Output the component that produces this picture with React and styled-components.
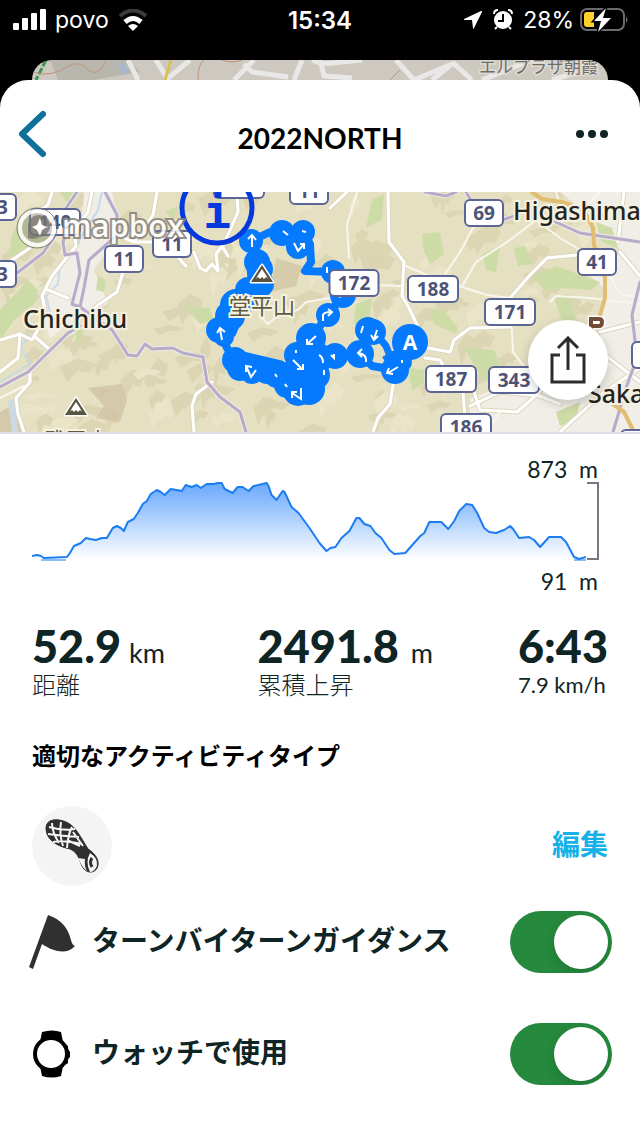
import styled, { createGlobalStyle } from "styled-components";

const elevation = [
  [0, 74], [5, 73], [9, 74], [12, 76], [35, 75], [38, 71], [42, 64], [49, 61], [54, 56], [58, 57],
  [64, 58], [70, 56], [75, 56], [81, 46], [85, 44], [89, 46], [92, 49], [96, 40], [102, 37],
  [106, 31], [111, 22], [115, 19], [119, 12], [125, 8], [129, 10], [133, 13], [139, 7], [145, 8],
  [150, 9], [154, 3], [160, 5], [165, 3], [169, 6], [175, 2], [182, 2], [186, 1], [190, 1],
  [193, 7], [201, 11], [206, 5], [211, 5], [217, 9], [222, 4], [235, 1], [237, 4], [240, 13],
  [245, 18], [251, 9], [253, 10], [260, 25], [267, 31], [278, 46], [288, 61], [295, 69],
  [299, 66], [304, 65], [310, 56], [318, 49], [325, 36], [328, 36], [333, 42], [339, 44],
  [344, 51], [350, 56], [358, 68], [363, 72], [374, 71], [381, 63], [389, 54], [393, 51],
  [398, 40], [405, 40], [410, 40], [417, 47], [423, 39], [428, 29], [435, 22], [441, 23],
  [446, 31], [453, 46], [458, 50], [465, 51], [470, 49], [473, 48], [479, 44], [482, 47],
  [488, 56], [498, 55], [503, 58], [509, 65], [518, 55], [530, 55], [535, 60], [543, 75],
  [548, 77], [555, 75],
];

const shields = [
  { x: 55, y: 30, w: 50, label: "140" },
  { x: 172, y: 52, w: 38, label: "11" },
  { x: 124, y: 67, w: 38, label: "11" },
  { x: -3, y: 15, w: 38, label: "13" },
  { x: -3, y: 82, w: 38, label: "13" },
  { x: 239, y: -7, w: 50, label: "274" },
  { x: 309, y: -1, w: 38, label: "11" },
  { x: 484, y: 21, w: 38, label: "69" },
  { x: 597, y: 70, w: 38, label: "41" },
  { x: 433, y: 97, w: 50, label: "188" },
  { x: 510, y: 120, w: 50, label: "171" },
  { x: 451, y: 187, w: 50, label: "187" },
  { x: 514, y: 188, w: 50, label: "343" },
  { x: 466, y: 235, w: 50, label: "186" },
  { x: 651, y: 163, w: 38, label: "74" },
  { x: 640, y: 251, w: 38, label: "15" },
];

const greens = [
  "M20 28L40 20L52 40L30 60L8 66L12 44Z",
  "M0 118L28 88L38 98L34 112L14 128L0 150Z",
  "M98 84L106 88L104 100L96 98Z",
  "M76 136L84 138L80 150L76 148Z",
  "M184 114L210 116L214 128L200 132Z",
  "M60 0L74 0L68 12Z",
  "M165 20L178 14L174 26Z",
  "M372 8L384 2L382 28L366 36Z",
  "M422 42L440 40L444 62L430 72L424 60Z",
  "M482 62L500 54L496 80L486 78Z",
  "M514 56L526 54L532 72L518 74Z",
  "M532 84L556 74L600 90L592 98L560 96L544 98Z",
  "M430 116L444 118L458 136L456 142L434 132Z",
  "M464 156L494 158L500 172L486 190L476 176Z",
  "M554 106L568 102L576 128L562 130Z",
  "M356 112L372 106L368 134L354 132Z",
  "M408 176L424 178L424 192L412 198Z",
  "M596 30L612 36L618 56L602 50Z",
  "M556 220L580 210L576 228L560 234Z",
];

const urban = [
  "M84 0L112 0L120 40L94 78L108 112L84 122L50 146L44 130L40 104L66 70L80 52Z",
  "M560 0L640 0L640 240L470 240L470 206L500 196L530 206L560 150L600 150L604 96L590 84L622 60L590 24Z",
];

const whiteRoads = [
  "M52 0L48 13L36 22M30 56L0 76",
  "M92 0L88 20L74 38L76 54L52 84L42 104L45 118",
  "M0 180L18 166L20 142L0 148",
  "M20 142L32 148L40 134M34 144L48 156",
  "M30 178L30 190L16 206L18 222L24 240",
  "M123 80L117 100L98 113L88 122",
  "M48 98L68 106",
  "M157 0L153 23L134 50L164 50L186 74M134 50L120 44",
  "M194 60L200 76L206 79L212 72L218 79L216 62L222 54L228 64",
  "M237 0L238 20L222 56",
  "M212 190L196 202L192 214L194 240",
  "M388 0L389 50L404 70L402 104L408 114L417 133",
  "M330 16L347 0",
  "M393 193L390 212L378 226L373 240",
  "M428 156L450 160L454 148L470 136L510 135",
  "M425 166L440 168L450 186L463 200L466 240",
  "M510 106L530 83L547 66L577 63",
  "M474 200L480 218L517 220L533 206L560 180",
  "M560 240L604 200L640 176",
  "M600 140L640 130M596 156L640 190",
  "M620 60L640 84M618 50L624 0",
  "M470 214L500 200L540 204L560 212",
];

const thinRoads = [
  "M357 0L347 33L349 66",
  "M403 73L420 80L440 90L460 60L473 36L500 20",
  "M440 88L487 103L510 106L513 160L527 178",
  "M463 93L476 70L510 48L536 28",
  "M260 124L268 132L280 122L298 118L306 110L330 106",
  "M375 93L402 94",
  "M550 110L556 104L590 106L640 112",
  "M536 28L560 46L580 58",
  "M556 0L566 30L590 10L600 0",
  "M610 84L620 102L640 106M590 160L612 174",
  "M0 206L24 194M486 240L500 220",
];

const purpleRoads = [
  "M77 0L62 22L68 36L63 50L65 63L77 61L80 81L72 112L80 115",
  "M105 0L117 23L117 43L89 68L84 96L80 115L112 138L128 163L137 164L145 152L152 157L173 156L183 161L203 165L207 190L220 205L240 220L246 240",
  "M0 195L28 180L68 141L80 134",
  "M17 81L43 61L56 42",
  "M425 0L446 4L456 0M466 0L472 10",
  "M496 30L517 23",
  "M538 22L580 41L640 50",
  "M640 90L632 123L637 166L627 193L613 240",
];

const routeDots = [
  [251, 49, 12], [282, 41, 13], [303, 40, 12], [298, 55, 12], [333, 80, 12], [343, 103, 13],
  [328, 123, 12], [311, 146, 15], [297, 163, 13], [257, 70, 13], [260, 77, 13], [261, 92, 13],
  [248, 98, 13], [236, 113, 16], [230, 124, 15], [219, 138, 13], [224, 145, 10], [235, 168, 13],
  [240, 176, 13], [252, 180, 12], [267, 179, 13], [277, 183, 13], [287, 193, 13], [298, 199, 15],
  [309, 197, 16], [315, 183, 15], [300, 174, 15], [318, 166, 15], [335, 164, 13], [360, 162, 14],
  [368, 138, 13], [373, 140, 13], [395, 178, 14], [402, 170, 10],
];

// small, fixed pseudo random sequence so the hill shading never changes
const hills = (() => {
  let seed = 41;
  const next = () => {
    seed = (seed * 16807) % 2147483647;
    return seed / 2147483647;
  };
  return Array.from({ length: 210 }, () => {
    const x = next() * 580;
    const y = next() * 240;
    const w = 10 + next() * 28;
    const h = 6 + next() * 18;
    return {
      d: `M${x} ${y}l${w * 0.5} ${-h * 0.5}l${w * 0.5} ${h * 0.3}l${-w * 0.2} ${h * 0.5}l${-w * 0.3} ${-h * 0.1}l${-w * 0.3} ${h * 0.6}Z`,
      fill: next() > 0.4 ? "#cfc49c" : "#f3eed6",
    };
  });
})();

function Shield({ x, y, w, label }) {
  return (
    <g>
      <rect x={x - w / 2} y={y - 13} width={w} height="26" rx="5" fill="#fff" stroke="#5b6596" strokeWidth="2" />
      <text x={x} y={y + 7} textAnchor="middle" fontSize="19" fontWeight="700" fill="#4c5377">
        {label}
      </text>
    </g>
  );
}

function Peak({ x, y }) {
  return (
    <g transform={`translate(${x} ${y})`}>
      <path d="M0 -9L11 8H-11Z" fill="#57533f" stroke="#fff" strokeWidth="3" paintOrder="stroke" strokeLinejoin="round" />
      <path d="M0 -5L4 1L6 5L4 3L2 5L0 3L-2 5L-4 3L-6 5L-4 1Z" fill="#fff" />
    </g>
  );
}

function RouteMap() {
  return (
    <MapDrawing viewBox="0 0 640 240" preserveAspectRatio="xMidYMid slice" role="img" aria-label="ルートマップ">
      <rect width="640" height="240" fill="#e5e0c2" />
      <g opacity="0.38">
        {hills.map((hill) => (
          <path key={hill.d} d={hill.d} fill={hill.fill} />
        ))}
      </g>
      <path d="M88 196L122 192L127 208L120 230L96 226L104 214Z" fill="#cdbfa0" opacity="0.7" />
      <path d="M0 220L14 212L22 240H0Z" fill="#cdbfa0" opacity="0.7" />
      <path d="M276 66L302 74L296 94L270 100Z" fill="#d0c3a2" opacity="0.7" />
      {urban.map((d) => (
        <path key={d} d={d} fill="#f1eee8" />
      ))}
      {greens.map((d) => (
        <path key={d} d={d} fill="#cddca6" />
      ))}
      <path d="M8 210L14 206L18 240H12Z" fill="#ccd9e6" />
      <path
        d="M102 0L98 18L84 40L72 60L60 72L58 92L46 104L50 120M0 190L30 172L20 154L38 138"
        fill="none"
        stroke="#c5dbe8"
        strokeWidth="2"
      />
      <g fill="none" stroke="#fff" strokeLinejoin="round" strokeLinecap="round">
        {whiteRoads.map((d) => (
          <path key={d} d={d} stroke="#ddd6bf" strokeWidth="5" />
        ))}
        {thinRoads.map((d) => (
          <path key={d} d={d} stroke="#f8f6ee" strokeWidth="2" />
        ))}
        {whiteRoads.map((d) => (
          <path key={d} d={d} strokeWidth="3" />
        ))}
        {purpleRoads.map((d) => (
          <path key={d} d={d} stroke="#f0ebe6" strokeWidth="5" />
        ))}
        {purpleRoads.map((d) => (
          <path key={d} d={d} stroke="#b6abc8" strokeWidth="3" />
        ))}
        <path d="M532 0L542 7L562 10L584 18L593 36L594 53L605 86L605 106L598 130M610 210L624 220L634 240" stroke="#e0bd70" strokeWidth="4" />
      </g>

      <g stroke="#057aff" fill="none" strokeLinejoin="round">
        <path d="M251 49L270 40L303 40L310 52L311 70L305 79L333 80L343 103L328 123L311 146" strokeWidth="8" />
        <path d="M219 138L227 156L235 168M311 146L318 166L345 162L360 162L372 174L395 178" strokeWidth="8" />
        <path d="M373 138L386 154L390 164L408 156M384 168L392 163" strokeWidth="7" />
        <path d="M258 70L260 92L236 113L224 140M236 170L278 180L305 196L318 166" strokeWidth="24" />
      </g>
      <g fill="#057aff">
        {routeDots.map(([x, y, r]) => (
          <circle key={`${x}-${y}`} cx={x} cy={y} r={r} />
        ))}
        <circle cx="410" cy="150" r="18" />
      </g>
      <g fill="none" stroke="#fff" strokeWidth="2">
        <path d="M252 55V44M248 47L252 43L256 48" />
        <path d="M283 39L288 43M302 39L306 40" />
        <path d="M294 51L298 59L304 52M300 52L304 52L304 57" />
        <path d="M327 75V81M339 105L344 103" />
        <path d="M323 129V123Q324 120 331 120M328 117L332 120L328 124" />
        <path d="M316 144L307 152M307 147V152H313" />
        <path d="M222 148L220 137M217 141L220 136L225 140" />
        <path d="M246 174L251 185L256 178M246 180L246 174L252 175" />
        <path d="M293 168L302 177M297 177H303V172M296 158V161" />
        <path d="M301 196V207L292 201M292 206V200H297" />
        <path d="M319 163Q323 165 323 171M331 163L334 166V162M324 183V178" />
        <path d="M366 170Q367 162 358 161M362 157L358 161L362 165" />
        <path d="M361 141L363 134M377 138L374 147M371 143L374 148L378 144" />
        <path d="M398 175L388 181M389 176L387 181L393 182M402 171V168" />
        <path d="M275 182L277 185M285 192L287 195" />
      </g>
      <text x="410" y="158" textAnchor="middle" fontSize="21" fontWeight="700" fill="#fff">
        A
      </text>

      {shields.map((s) => (
        <Shield key={`${s.x}-${s.y}`} {...s} />
      ))}
      <Shield x={354} y={91} w={49} label="172" />

      <PlaceName x="23" y="136">Chichibu</PlaceName>
      <PlaceName x="513" y="28">Higashimatsuyama</PlaceName>
      <PlaceName x="588" y="211">Sakado</PlaceName>
      <MountainName x="262" y="122">堂平山</MountainName>
      <MountainName x="76" y="256">武甲山</MountainName>
      <Peak x={262} y={82} />
      <Peak x={76} y={215} />
      <path d="M591 137V127H599Q602 127 602 130Q602 134 599 134H591" fill="none" stroke="#fff" strokeWidth="7" />
      <path d="M591 137V127H599Q602 127 602 130Q602 134 599 134H591" fill="none" stroke="#754c36" strokeWidth="4" />

      <circle cx="217" cy="16" r="35" fill="none" stroke="#0339dd" strokeWidth="5" />
      <text x="217" y="36" textAnchor="middle" fontFamily="'DejaVu Sans Mono', monospace" fontSize="46" fontWeight="700" fill="#0339dd">
        i
      </text>

      <g opacity="0.85">
        <circle cx="37" cy="36" r="17" fill="#8b8780" fillOpacity="0.5" stroke="#fff" strokeWidth="4" />
        <circle cx="37" cy="36" r="20" fill="none" stroke="#77736b" strokeWidth="1" />
        <circle cx="39" cy="34" r="11" fill="#77736b" />
        <path d="M28 46V34L40 45Q34 48 28 46Z" fill="#77736b" />
        <path d="M40 26L42 33L48 35L42 38L40 44L37 38L32 35L37 33Z" fill="#fff" />
        <Watermark x="62" y="45">mapbox</Watermark>
      </g>
    </MapDrawing>
  );
}

function ElevationChart() {
  const line = elevation.map(([x, y]) => `${x},${y}`).join(" ");
  return (
    <ChartDrawing viewBox="0 0 556 80" preserveAspectRatio="none" role="img" aria-label="高度グラフ">
      <defs>
        <linearGradient id="climb" x1="0" y1="0" x2="0" y2="78" gradientUnits="userSpaceOnUse">
          <stop offset="0" stopColor="#6aa9fd" />
          <stop offset="0.15" stopColor="#7db4fd" />
          <stop offset="1" stopColor="#fff" />
        </linearGradient>
      </defs>
      <polygon points={`0,78 ${line} 555,78`} fill="url(#climb)" />
      <polyline points={line} fill="none" stroke="#1c7df2" strokeWidth="2" strokeLinejoin="round" />
      <path d="M9 78H34M543 78H555" stroke="#1c7df2" strokeWidth="1" />
    </ChartDrawing>
  );
}

function SettingRow({ id, icon, children }) {
  return (
    <Row>
      {icon}
      <RowLabel htmlFor={id}>{children}</RowLabel>
      <Toggle id={id} type="checkbox" role="switch" defaultChecked />
    </Row>
  );
}

export default function App() {
  return (
    <>
      <GlobalStyle />
      <StatusBar>
        <StatusSide>
          <svg width="34" height="22" viewBox="0 0 34 22" fill="#fff">
            <rect x="1" y="14" width="6" height="7" rx="1" />
            <rect x="10" y="9" width="6" height="12" rx="1" />
            <rect x="19" y="4" width="6" height="17" rx="1" />
            <rect x="28" y="0" width="6" height="21" rx="1" />
          </svg>
          povo
          <svg width="30" height="22" viewBox="0 0 30 22" fill="none" strokeWidth="4">
            <path d="M2 7Q15 -4 28 7" stroke="#3b3b3b" />
            <path d="M7 13Q15 6 23 13" stroke="#fff" strokeWidth="5" />
            <path d="M15 22L10 17Q15 13 20 17Z" fill="#fff" />
          </svg>
        </StatusSide>
        <Clock>15:34</Clock>
        <StatusSide $end>
          <svg width="20" height="20" viewBox="0 0 20 20" fill="#fff">
            <path d="M18 1L1 9Q0 10 2 10L9 10L10 18Q10 20 11 18L19 2Q19 0 18 1Z" />
          </svg>
          <svg width="20" height="22" viewBox="0 0 20 22">
            <path d="M1 5Q1 1 5 1M19 5Q19 1 15 1M4 18L2 20M16 18L18 20" stroke="#fff" strokeWidth="2" fill="none" />
            <circle cx="10" cy="11" r="9" fill="#fff" />
            <path d="M10 5V12H5" stroke="#000" strokeWidth="2" fill="none" />
          </svg>
          <Battery>
            28%
            <svg width="48" height="24" viewBox="0 0 48 24">
              <rect x="1" y="1" width="43" height="21" rx="6" fill="none" stroke="#6c6c70" strokeWidth="2" />
              <path d="M46 8Q49 12 46 15Z" fill="#6c6c70" />
              <path d="M7 4H14V19H7Q4 19 4 16V7Q4 4 7 4Z" fill="#ffd02e" />
              <path d="M26 0L14 13H21L18 24L31 10H23Z" fill="#fff" stroke="#000" strokeWidth="3" paintOrder="stroke" />
            </svg>
          </Battery>
        </StatusSide>
      </StatusBar>

      <PreviousSheet>
        <svg width="100%" height="20" viewBox="0 0 576 20" preserveAspectRatio="xMidYMid slice" fill="none">
          <rect width="576" height="20" fill="#cdc9c0" />
          <path d="M18 0H96L108 12L62 20H26Z" fill="#b9b7ad" />
          <path d="M86 4L92 2L97 12L90 15Z" fill="#a9b7cc" />
          <g stroke="#e8e8e7" strokeWidth="5">
            <path d="M96 0L106 20M124 0L136 20M158 0L134 20M222 0L202 20M212 4L220 12L256 17M270 0L262 20M280 0L290 4L330 0M288 0L292 16L320 18M364 0L382 20L420 4L400 20M420 2L440 20M450 20L500 0M520 20L560 8" />
          </g>
          <path d="M14 0L4 20" stroke="#3d9454" strokeWidth="3" strokeDasharray="7 2" />
          <path d="M0 12Q20 18 36 6Q50 0 56 10Q68 18 74 0" stroke="#c4927c" />
          <path d="M166 20Q166 4 172 0M190 0Q200 4 210 0M358 20L368 10" stroke="#c4927c" />
          <path d="M139 0L133 20" stroke="#d9c050" strokeWidth="3" />
          <text x="447" y="13" fontSize="17" fill="#6f6d68" stroke="#dedbd4" strokeWidth="3" paintOrder="stroke">
            エルプラザ朝霞
          </text>
        </svg>
      </PreviousSheet>

      <Sheet>
        <Header>
          <IconButton aria-label="戻る">
            <svg width="28" height="48" viewBox="0 0 28 48" fill="none" stroke="#0f7199" strokeWidth="6" strokeLinecap="round" strokeLinejoin="round">
              <path d="M25 4L4 24L25 44" />
            </svg>
          </IconButton>
          <Title>2022NORTH</Title>
          <IconButton aria-label="メニュー" $end>
            <svg width="32" height="8" viewBox="0 0 32 8" fill="#0e2425">
              <circle cx="4" cy="4" r="4" />
              <circle cx="16" cy="4" r="4" />
              <circle cx="28" cy="4" r="4" />
            </svg>
          </IconButton>
        </Header>

        <MapPanel>
          <RouteMap />
          <ShareButton aria-label="共有">
            <svg width="36" height="48" viewBox="0 0 36 48" fill="none" stroke="#2d2d2d" strokeWidth="3">
              <path d="M10 19H2V46H34V19H26M18 34V2M8 12L18 2L28 12" />
            </svg>
          </ShareButton>
        </MapPanel>

        <Profile>
          <Altitude>873&nbsp; m</Altitude>
          <ChartRow>
            <ElevationChart />
            <Bracket />
          </ChartRow>
          <Altitude>91&nbsp; m</Altitude>
        </Profile>

        <Stats>
          <div>
            <StatValue>
              52.9<Unit $gap={8}>km</Unit>
            </StatValue>
            <StatLabel>距離</StatLabel>
          </div>
          <div>
            <StatValue>
              2491.8<Unit $gap={12}>m</Unit>
            </StatValue>
            <StatLabel>累積上昇</StatLabel>
          </div>
          <div>
            <StatValue>6:43</StatValue>
            <Pace>7.9 km/h</Pace>
          </div>
        </Stats>

        <SectionTitle>適切なアクティビティタイプ</SectionTitle>
        <Activity>
          <ActivityBadge>
            <svg width="80" height="80" viewBox="0 0 80 80">
              <path
                d="M14 22C14 13 25 12 34 16C44 20 49 32 56 43C61 46 67 52 66 59C65 67 56 68 52 63C47 57 48 47 38 43C29 41 14 36 14 22Z"
                fill="#303030"
                stroke="#303030"
                strokeWidth="1"
              />
              <path
                d="M20 17Q20 26 27 37M29 16Q27 28 31 40M40 21Q36 28 35 42M17 21Q31 25 43 23M16 28Q30 30 47 31M21 36Q31 34 50 38M41 26L51 40M35 34L48 40"
                fill="none"
                stroke="#f4f4f4"
                strokeWidth="2"
              />
              <path d="M46 52L53 53Q52 60 55 65Q51 63 46 52Z" fill="#f4f4f4" />
              <path d="M58 47Q66 52 65 60Q62 66 58 66Q53 56 58 47Z" fill="#f4f4f4" />
              <path d="M60 52Q57 56 60 61" fill="none" stroke="#303030" strokeWidth="3" />
            </svg>
          </ActivityBadge>
          <EditLink href="#edit">編集</EditLink>
        </Activity>

        <SettingRow
          id="turn-by-turn"
          icon={
            <svg width="48" height="54" viewBox="0 0 48 54" fill="#303030">
              <path d="M20 0C34 5 40 13 43 25Q44 30 47 31C39 40 26 37 14 29L5 54L1 52Z" />
            </svg>
          }
        >
          ターンバイターンガイダンス
        </SettingRow>
        <SettingRow
          id="use-on-watch"
          icon={
            <svg width="48" height="48" viewBox="0 0 48 48">
              <path d="M14 2Q24 -1 33 2L35 12H12ZM12 36H35L33 46Q24 49 14 46Z" fill="#000" />
              <circle cx="23" cy="24" r="16" fill="#fff" stroke="#000" strokeWidth="4" />
              <path d="M37 14L40 16V19L42 22V27L40 29V33L37 35Q43 25 37 14Z" fill="#000" />
            </svg>
          }
        >
          ウォッチで使用
        </SettingRow>
      </Sheet>
    </>
  );
}

const GlobalStyle = createGlobalStyle`
  * {
    box-sizing: border-box;
  }

  html,
  body {
    height: 100%;
  }

  body {
    margin: 0;
    background-color: #000;
    color: #0e2425;
    font-family: Lato, "Noto Sans CJK JP", sans-serif;
  }

  #root {
    display: flex;
    flex-direction: column;
    min-height: 100%;
  }

  svg {
    display: block;
    flex-shrink: 0;
  }

  button {
    padding: 0;
    border: 0;
    background: none;
    cursor: pointer;
  }
`;

const StatusBar = styled.header`
  display: grid;
  grid-template-columns: 1fr auto 1fr;
  align-items: center;
  height: 40px;
  margin-bottom: 20px;
  padding: 0 12px;
  color: #fff;
  font-family: Inter, sans-serif;
`;

const StatusSide = styled.div`
  display: flex;
  align-items: center;
  justify-content: ${(props) => (props.$end ? "flex-end" : "flex-start")};
  gap: ${(props) => (props.$end ? "10px" : "9px")};
  font-size: 23px;
`;

const Battery = styled.span`
  display: flex;
  align-items: center;
  gap: 6px;
`;

const Clock = styled.time`
  font-size: 24px;
  font-weight: 600;
`;

const PreviousSheet = styled.div`
  margin: 0 32px;
  border-radius: 20px 20px 0 0;
  overflow: hidden;
`;

const Sheet = styled.main`
  flex: 1;
  border-radius: 28px 28px 0 0;
  background-color: #fff;
  overflow: hidden;
`;

const Header = styled.div`
  display: grid;
  grid-template-columns: 1fr auto 1fr;
  align-items: center;
  height: 112px;
  padding: 0 32px 4px 18px;
`;

const IconButton = styled.button`
  justify-self: ${(props) => (props.$end ? "end" : "start")};
`;

const Title = styled.h1`
  margin: 8px 0 0 14px;
  color: #000;
  font-size: 28px;
  font-weight: 700;
`;

const MapPanel = styled.section`
  position: relative;
  border-bottom: 2px solid #dcdfe5;
`;

const MapDrawing = styled.svg`
  width: 100%;
  height: 240px;
  font-family: "Open Sans", "Noto Sans CJK JP", sans-serif;
`;

const PlaceName = styled.text`
  font-family: "Noto Sans", sans-serif;
  font-size: 25px;
  font-weight: 500;
  fill: #25231b;
  stroke: #f4f1e2;
  stroke-width: 4px;
  paint-order: stroke;
`;

const MountainName = styled.text`
  font-size: 22px;
  text-anchor: middle;
  fill: #5f5b42;
  stroke: #f6f2df;
  stroke-width: 4px;
  paint-order: stroke;
`;

const Watermark = styled.text`
  font-size: 31px;
  font-weight: 600;
  fill: #fff;
  stroke: #858179;
  stroke-width: 4px;
  paint-order: stroke;
`;

const ShareButton = styled.button`
  position: absolute;
  right: 32px;
  bottom: 32px;
  display: flex;
  align-items: center;
  justify-content: center;
  width: 80px;
  height: 80px;
  border-radius: 50%;
  background-color: #fff;
  box-shadow: 0 4px 12px rgba(0, 0, 0, 0.2);
`;

const Profile = styled.section`
  padding: 22px 42px 0 32px;
`;

const Altitude = styled.div`
  font-size: 23px;
  line-height: 26px;
  text-align: right;
`;

const ChartRow = styled.div`
  display: flex;
  height: 86px;
`;

const ChartDrawing = styled.svg`
  flex: 1;
  min-width: 0;
  height: 80px;
`;

const Bracket = styled.div`
  width: 12px;
  height: 78px;
  margin-right: -1px;
  border: 2px solid #757982;
  border-left: 0;
`;

const Stats = styled.section`
  display: grid;
  grid-template-columns: 13fr 15fr auto;
  padding: 26px 32px 0;
`;

const StatValue = styled.div`
  font-size: 45px;
  font-weight: 900;
  line-height: 52px;
`;

const Unit = styled.span`
  margin-left: ${(props) => props.$gap}px;
  font-size: 27px;
  font-weight: 400;
  line-height: 1;
`;

const StatLabel = styled.div`
  font-size: 24px;
  font-weight: 300;
  line-height: 26px;
`;

const Pace = styled(StatLabel)`
  font-size: 22px;
  font-weight: 400;
`;

const SectionTitle = styled.h2`
  margin: 40px 32px 0;
  color: #000;
  font-size: 24px;
  font-weight: 700;
  line-height: 36px;
`;

const Activity = styled.div`
  display: flex;
  align-items: center;
  justify-content: space-between;
  margin-top: 32px;
  padding: 0 32px;
`;

const ActivityBadge = styled.div`
  border-radius: 50%;
  background-color: #f4f4f4;
`;

const EditLink = styled.a`
  padding-bottom: 6px;
  color: #17b1ea;
  font-size: 28px;
  font-weight: 700;
  text-decoration: none;
`;

const Row = styled.div`
  display: flex;
  align-items: center;
  height: 112px;
  padding: 0 28px;
`;

const RowLabel = styled.label`
  flex: 1;
  margin-left: 16px;
  padding-bottom: 6px;
  font-size: 28px;
  font-weight: 600;
`;

const Toggle = styled.input`
  appearance: none;
  width: 102px;
  height: 62px;
  margin: 0;
  padding: 4px;
  border-radius: 31px;
  background-color: #aaa;
  overflow: hidden;
  cursor: pointer;

  &::before {
    content: "";
    display: block;
    width: 54px;
    height: 54px;
    border-radius: 50%;
    background-color: #fff;
    box-shadow: 0 4px 12px rgba(0, 0, 0, 0.15);
  }

  &:checked {
    background-color: #258a3d;
  }

  &:checked::before {
    margin-left: auto;
  }
`;
